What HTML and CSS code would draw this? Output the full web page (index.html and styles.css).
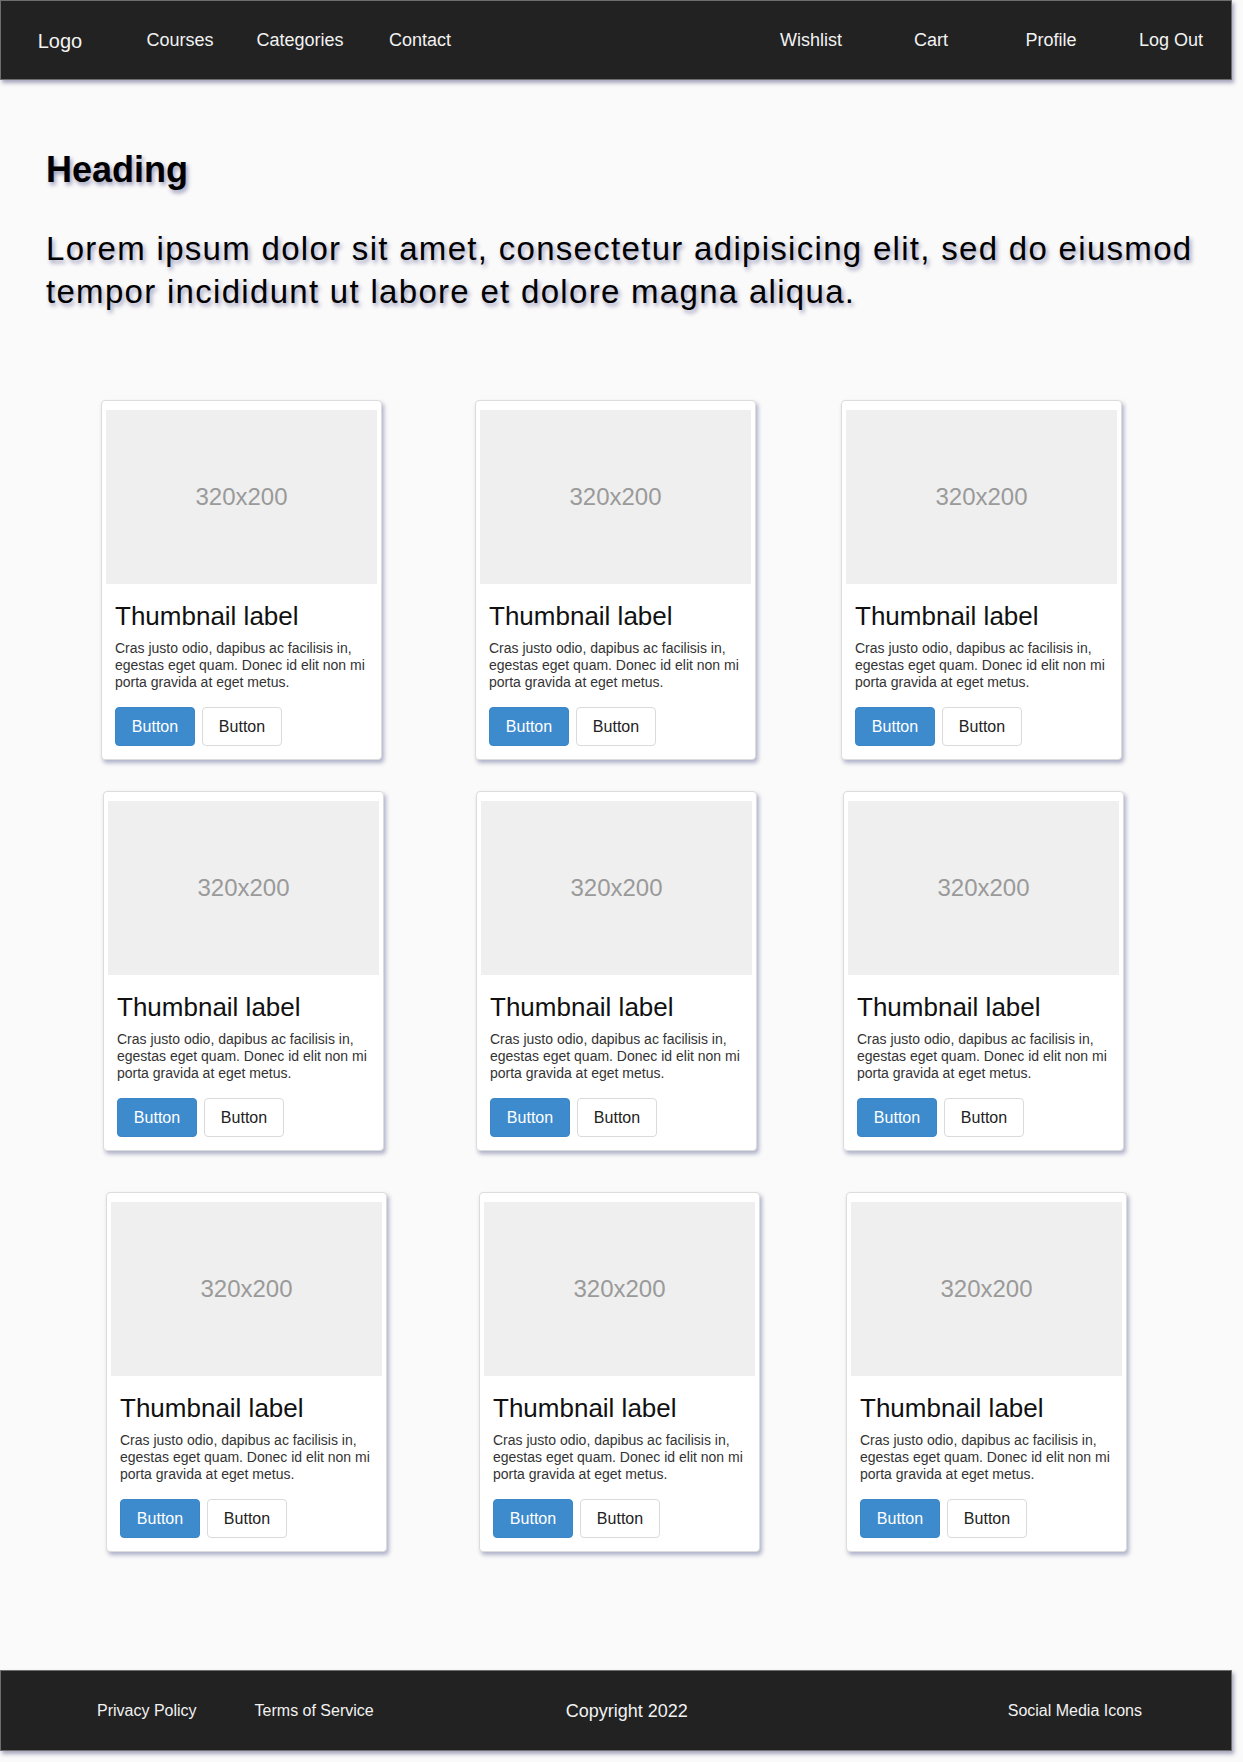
FILE: index.html
```html
<!DOCTYPE html>
<html lang="en">
<head>
<meta charset="utf-8">
<title>Courses</title>
<link rel="stylesheet" href="styles.css">
</head>
<body>
<nav class="navbar">
  <a class="nav-item logo" href="#">Logo</a>
  <a class="nav-item" href="#">Courses</a>
  <a class="nav-item" href="#">Categories</a>
  <a class="nav-item" href="#">Contact</a>
  <span class="nav-spacer"></span>
  <a class="nav-item" href="#">Wishlist</a>
  <a class="nav-item" href="#">Cart</a>
  <a class="nav-item" href="#">Profile</a>
  <a class="nav-item" href="#">Log Out</a>
</nav>

<main class="main">
  <h1 class="heading">Heading</h1>
  <p class="lead">Lorem ipsum dolor sit amet, consectetur adipisicing elit, sed do eiusmod tempor incididunt ut labore et dolore magna aliqua.</p>

  <section class="cards">
    <div class="card-row row-1">
      <div class="card"><div class="thumb">320x200</div><div class="caption"><h3>Thumbnail label</h3><p>Cras justo odio, dapibus ac facilisis in, egestas eget quam. Donec id elit non mi porta gravida at eget metus.</p><div class="actions"><a class="btn btn-primary" href="#">Button</a><a class="btn btn-default" href="#">Button</a></div></div></div>
      <div class="card"><div class="thumb">320x200</div><div class="caption"><h3>Thumbnail label</h3><p>Cras justo odio, dapibus ac facilisis in, egestas eget quam. Donec id elit non mi porta gravida at eget metus.</p><div class="actions"><a class="btn btn-primary" href="#">Button</a><a class="btn btn-default" href="#">Button</a></div></div></div>
      <div class="card"><div class="thumb">320x200</div><div class="caption"><h3>Thumbnail label</h3><p>Cras justo odio, dapibus ac facilisis in, egestas eget quam. Donec id elit non mi porta gravida at eget metus.</p><div class="actions"><a class="btn btn-primary" href="#">Button</a><a class="btn btn-default" href="#">Button</a></div></div></div>
    </div>
    <div class="card-row row-2">
      <div class="card"><div class="thumb">320x200</div><div class="caption"><h3>Thumbnail label</h3><p>Cras justo odio, dapibus ac facilisis in, egestas eget quam. Donec id elit non mi porta gravida at eget metus.</p><div class="actions"><a class="btn btn-primary" href="#">Button</a><a class="btn btn-default" href="#">Button</a></div></div></div>
      <div class="card"><div class="thumb">320x200</div><div class="caption"><h3>Thumbnail label</h3><p>Cras justo odio, dapibus ac facilisis in, egestas eget quam. Donec id elit non mi porta gravida at eget metus.</p><div class="actions"><a class="btn btn-primary" href="#">Button</a><a class="btn btn-default" href="#">Button</a></div></div></div>
      <div class="card"><div class="thumb">320x200</div><div class="caption"><h3>Thumbnail label</h3><p>Cras justo odio, dapibus ac facilisis in, egestas eget quam. Donec id elit non mi porta gravida at eget metus.</p><div class="actions"><a class="btn btn-primary" href="#">Button</a><a class="btn btn-default" href="#">Button</a></div></div></div>
    </div>
    <div class="card-row row-3">
      <div class="card"><div class="thumb">320x200</div><div class="caption"><h3>Thumbnail label</h3><p>Cras justo odio, dapibus ac facilisis in, egestas eget quam. Donec id elit non mi porta gravida at eget metus.</p><div class="actions"><a class="btn btn-primary" href="#">Button</a><a class="btn btn-default" href="#">Button</a></div></div></div>
      <div class="card"><div class="thumb">320x200</div><div class="caption"><h3>Thumbnail label</h3><p>Cras justo odio, dapibus ac facilisis in, egestas eget quam. Donec id elit non mi porta gravida at eget metus.</p><div class="actions"><a class="btn btn-primary" href="#">Button</a><a class="btn btn-default" href="#">Button</a></div></div></div>
      <div class="card"><div class="thumb">320x200</div><div class="caption"><h3>Thumbnail label</h3><p>Cras justo odio, dapibus ac facilisis in, egestas eget quam. Donec id elit non mi porta gravida at eget metus.</p><div class="actions"><a class="btn btn-primary" href="#">Button</a><a class="btn btn-default" href="#">Button</a></div></div></div>
    </div>
  </section>
</main>

<footer class="footer">
  <a class="footer-link first" href="#">Privacy Policy</a>
  <a class="footer-link second" href="#">Terms of Service</a>
  <span class="copyright">Copyright 2022</span>
  <a class="footer-link social" href="#">Social Media Icons</a>
</footer>
</body>
</html>
```

FILE: styles.css
```css
* {
  box-sizing: border-box;
}

html, body {
  margin: 0;
  padding: 0;
}

body {
  background: #fafafa;
  font-family: "Liberation Sans", Arial, sans-serif;
  color: #111;
  width: 1243px;
  min-height: 1762px;
}

a {
  text-decoration: none;
  color: inherit;
}

/* ---------- Navbar ---------- */
.navbar {
  width: 1232px;
  height: 80px;
  background: #222222;
  border: 1px solid #6e6e6e;
  box-shadow: 2px 3px 4px rgba(60, 62, 110, 0.45);
  display: flex;
  align-items: center;
  padding-left: 0;
}

.nav-item {
  width: 120px;
  flex: 0 0 120px;
  text-align: center;
  color: #f2f2f2;
  font-size: 18px;
  line-height: 22px;
}

.nav-item.logo {
  font-size: 20px;
  padding-top: 2px;
  margin-left: -1px;
}

.nav-spacer {
  flex: 1 1 auto;
}

/* ---------- Main ---------- */
.main {
  padding: 69px 20px 0 46px;
}

.heading {
  margin: 0;
  font-size: 36px;
  line-height: 41px;
  font-weight: bold;
  color: #000;
  text-shadow: 2px 3px 4px rgba(40, 40, 110, 0.45);
}

.lead {
  margin: 37px 0 0;
  font-size: 33px;
  line-height: 43px;
  letter-spacing: 1.3px;
  color: #000;
  text-shadow: 2px 3px 4px rgba(40, 40, 110, 0.45);
}

/* ---------- Cards ---------- */
.cards {
  margin: 87px 0 0 -46px;
}

.card-row {
  display: grid;
  grid-template-columns: 374px 366px 281px;
}

.row-1 { padding-left: 101px; }
.row-2 { padding-left: 103px; margin-top: 31px; grid-template-columns: 373px 367px 281px; }
.row-3 { padding-left: 106px; margin-top: 41px; grid-template-columns: 373px 367px 281px; }

.card {
  width: 281px;
  background: #fff;
  border: 1px solid #dcdcdc;
  border-radius: 4px;
  padding: 9px 4px 4px;
  box-shadow: 2px 3px 4px rgba(70, 76, 130, 0.42);
}

.thumb {
  height: 174px;
  background: #efefef;
  color: #9a9a9a;
  font-size: 24px;
  display: flex;
  align-items: center;
  justify-content: center;
}

.caption {
  padding: 9px;
}

.caption h3 {
  margin: 9px 0 9px;
  font-size: 26px;
  line-height: 29px;
  font-weight: normal;
  color: #111;
}

.caption p {
  margin: 0 0 16px;
  font-size: 14px;
  line-height: 17px;
  color: #333;
}

.actions {
  display: flex;
  gap: 7px;
}

.btn {
  display: inline-flex;
  align-items: center;
  justify-content: center;
  width: 80px;
  height: 39px;
  border-radius: 4px;
  font-size: 16px;
  border: 1px solid transparent;
}

.btn-primary {
  background: #3d8bcd;
  border-color: #3a86c6;
  color: #fff;
}

.btn-default {
  background: #fff;
  border-color: #dadada;
  color: #222;
}

/* ---------- Footer ---------- */
.footer {
  margin-top: 118px;
  width: 1232px;
  height: 81px;
  background: #222222;
  border: 1px solid #6e6e6e;
  box-shadow: 2px 3px 4px rgba(60, 62, 110, 0.45);
  display: flex;
  align-items: center;
  color: #f2f2f2;
}

.footer-link,
.copyright {
  font-size: 16px;
  line-height: 20px;
  color: #f2f2f2;
}

.footer-link.first {
  margin-left: 96px;
}

.footer-link.second {
  margin-left: 58px;
}

.copyright {
  font-size: 18px;
  margin-left: 192px;
}

.footer-link.social {
  margin-left: auto;
  margin-right: 89px;
}
```
